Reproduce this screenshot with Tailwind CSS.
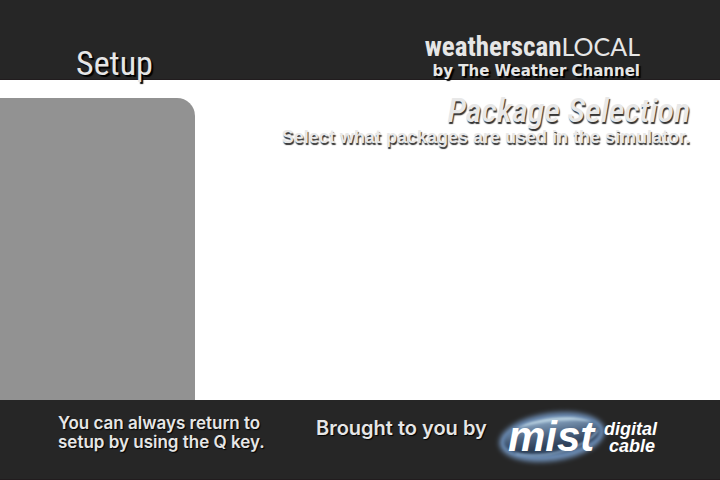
<!DOCTYPE html>
<html lang="en">
<head>
<meta charset="utf-8">
<meta name="viewport" content="width=device-width, initial-scale=1">
<title>Setup</title>
<script src="https://cdn.jsdelivr.net/npm/@tailwindcss/browser@4"></script>
</head>
<body class="flex min-h-screen flex-col bg-white font-['Liberation_Sans',Arial,sans-serif] text-[#e6e6e6]">
<header class="flex h-20 items-end justify-between border-b border-[#211c1e] bg-[#262626] pl-19 pr-20">
  <h1 class="font-['Roboto_Condensed',sans-serif] text-[34px] leading-8 [text-shadow:2px_2px_1px_#000]">Setup</h1>
  <div class="flex flex-col items-end whitespace-nowrap">
    <div class="flex items-baseline leading-8">
      <span class="font-['Roboto_Condensed',sans-serif] text-[27px] font-bold">weatherscan</span>
      <span class="font-['Lato',sans-serif] text-[25px] font-normal">LOCAL</span>
    </div>
    <div class="font-['DejaVu_Sans',sans-serif] text-[15px] font-bold leading-4 [text-shadow:2px_2px_1px_#000]">by The Weather Channel</div>
  </div>
</header>
<main class="flex grow">
  <aside class="mt-[18px] w-[195px] shrink-0 rounded-tr-[18px] bg-[#929292]"></aside>
  <section class="grow pt-3 pr-[30px] text-right whitespace-nowrap">
    <h2 class="font-['Roboto_Condensed',sans-serif] text-[34px] font-medium italic leading-9 text-[#e8e8e8] [text-shadow:1px_2px_1px_#333]">Package Selection</h2>
    <p class="text-lg font-bold leading-[18px] text-[#e8e8e8] [text-shadow:1px_2px_1px_#333]">Select what packages are used in the simulator.</p>
  </section>
</main>
<footer class="flex h-20 border-b border-[#211c1e] bg-[#262626] whitespace-nowrap">
  <p class="ml-[58px] mt-[14px] w-[258px] font-['Inter',sans-serif] text-[17px] font-semibold leading-[19px] [text-shadow:1px_1px_1px_#000]">You can always return to<br>setup by using the Q key.</p>
  <p class="mt-4 w-44 font-['Inter',sans-serif] text-xl font-semibold leading-6 [text-shadow:1px_1px_1px_#000]">Brought to you by</p>
  <svg class="mt-1 h-[72px] w-[176px]" viewBox="0 0 176 72" role="img" aria-label="mist digital cable">
    <defs>
      <filter id="glow" x="-20%" y="-40%" width="140%" height="180%"><feGaussianBlur stdDeviation="2.5"/></filter>
      <filter id="soft" x="-10%" y="-20%" width="120%" height="140%"><feGaussianBlur stdDeviation="1"/></filter>
      <linearGradient id="oval" x1="0" y1="0" x2="0" y2="1">
        <stop offset="0" stop-color="#8ba8c4"/><stop offset="0.45" stop-color="#4a617e"/><stop offset="0.8" stop-color="#2b3c54"/><stop offset="1" stop-color="#435d7d"/>
      </linearGradient>
    </defs>
    <ellipse cx="60" cy="33" rx="53" ry="24" transform="rotate(-8 60 33)" fill="#6d8db5" filter="url(#glow)"/>
    <ellipse cx="60" cy="33" rx="49" ry="18" transform="rotate(-8 60 33)" fill="url(#oval)" stroke="#5c7a9f" stroke-width="2" filter="url(#soft)"/>
    <path d="M24 25C42 13 84 9 100 18C80 14 48 17 24 25Z" fill="#b8d0e0" filter="url(#soft)"/>
    <path d="M24 50C56 56 96 42 106 26" fill="none" stroke="#8ba8c6" stroke-width="1.5" filter="url(#soft)"/>
    <g fill="#fff" font-family="'Liberation Sans',Arial,sans-serif" font-weight="700" font-style="italic">
      <text x="16" y="47" font-size="42">mist</text>
      <text x="112" y="31" font-size="18">digital</text>
      <text x="117" y="48" font-size="18">cable</text>
    </g>
  </svg>
</footer>
</body>
</html>
